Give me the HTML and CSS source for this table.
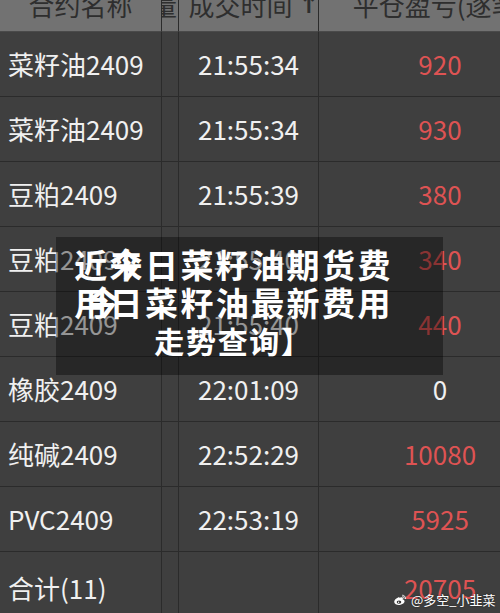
FILE: index.html
```html
<!DOCTYPE html>
<html lang="zh-CN">
<head>
    <meta charset="UTF-8">
    <meta name="viewport" content="width=device-width, initial-scale=1.0">
    <title>近来日菜籽油期货费用</title>
    <link rel="stylesheet" href="styles.css">
</head>
<body>
    <div class="screen">
        <div class="grid">
            <div class="cell head">合约名称</div>
            <div class="cell head narrow">量</div>
            <div class="cell head shifted">成交时间 <span class="arrow">↑</span></div>
            <div class="cell head">平仓盈亏(逐笔)</div>

            <div class="cell name">菜籽油2409</div><div class="cell gap"></div><div class="cell time">21:55:34</div><div class="cell val red">920</div>
            <div class="cell name">菜籽油2409</div><div class="cell gap"></div><div class="cell time">21:55:34</div><div class="cell val red">930</div>
            <div class="cell name">豆粕2409</div><div class="cell gap"></div><div class="cell time">21:55:39</div><div class="cell val red">380</div>
            <div class="cell name">豆粕2409</div><div class="cell gap"></div><div class="cell time">21:55:40</div><div class="cell val red">340</div>
            <div class="cell name">豆粕2409</div><div class="cell gap"></div><div class="cell time">21:55:40</div><div class="cell val red">440</div>
            <div class="cell name">橡胶2409</div><div class="cell gap"></div><div class="cell time">22:01:09</div><div class="cell val">0</div>
            <div class="cell name">纯碱2409</div><div class="cell gap"></div><div class="cell time">22:52:29</div><div class="cell val red">10080</div>
            <div class="cell name">PVC2409</div><div class="cell gap"></div><div class="cell time">22:53:19</div><div class="cell val red">5925</div>
            <div class="cell name total">合计(11)</div><div class="cell gap total"></div><div class="cell time total"></div><div class="cell val red total">20705</div>
        </div>

        <div class="banner">
            <div class="line">近<span class="stack">来<span class="over">今</span></span>日菜籽油期货费</div>
            <div class="line"><span class="stack">用<span class="over nudge">今</span></span>日菜籽油最新费用</div>
            <div class="line small">走势查询】</div>
        </div>

        <div class="mark">
            <svg class="weibo" width="14" height="12" viewBox="0 0 14 12">
                <path d="M5.6 3.2C3 4.2 1 6.2 1.2 8c.2 2 2.8 3.2 5.6 2.9 2.9-.3 5-2 4.8-3.8-.1-1.1-1.2-1.6-2-1.6.4-.8.5-1.6-.2-2-.8-.4-2.2.1-3.2.6.3-.8.2-1.5-.6-.9z" fill="#fff"/>
                <ellipse cx="6" cy="8.1" rx="2.3" ry="1.6" fill="#333"/>
                <circle cx="5.6" cy="8.2" r="0.7" fill="#fff"/>
                <path d="M9.6 1.2a3 3 0 0 1 3 3.4M9.8 2.6a1.5 1.5 0 0 1 1.4 1.8" stroke="#fff" stroke-width="0.9" fill="none" stroke-linecap="round"/>
            </svg>
            <span>@多空_小韭菜</span>
        </div>
    </div>
</body>
</html>
```

FILE: styles.css
```css
body {
    margin: 0;
    padding: 0;
    background: #3f3f3f;
    font-family: "Noto Sans CJK SC", "Noto Sans", sans-serif;
}
.screen {
    position: relative;
    width: 500px;
    height: 613px;
    overflow: hidden;
    background: #3f3f3f;
}
.grid {
    display: grid;
    width: 561px;
    grid-template-columns: 162px 17px 140px 242px;
    grid-auto-rows: 65px;
    grid-template-rows: 32px;
}
.cell {
    box-sizing: border-box;
    border-right: 1px solid #2b2b2b;
    border-bottom: 1px solid #2b2b2b;
    display: flex;
    align-items: center;
    justify-content: center;
    overflow: hidden;
    font-size: 26px;
    line-height: 26px;
    color: #f0f0f0;
    white-space: nowrap;
}
.head {
    background: #727272;
    color: #2e2e2e;
    align-items: flex-end;
    padding-bottom: 13px;
    border-bottom-color: #4a4a4a;
}
.head.narrow {
    justify-content: flex-end;
    padding-right: 1px;
}
.head.shifted {
    padding-left: 10px;
}
.arrow {
    font-family: "DejaVu Sans", sans-serif;
    font-weight: 700;
    font-size: 24px;
    margin-left: 6px;
}
.name {
    justify-content: flex-start;
    padding-left: 8px;
}
.val {
    border-right: none;
}
.red {
    color: #de5353;
}
.total {
    align-items: flex-start;
    padding-top: 23px;
}
.banner {
    position: absolute;
    left: 56px;
    top: 237px;
    width: 387px;
    height: 138px;
    box-sizing: border-box;
    padding: 8px 50px 0 18px;
    background: rgba(0, 0, 0, 0.38);
    color: #fff;
    font-weight: 700;
    text-align: center;
}
.line {
    font-size: 33px;
    line-height: 38px;
    letter-spacing: 2.4px;
    white-space: nowrap;
}
.line.small {
    font-size: 30px;
    letter-spacing: 1.7px;
}
.stack {
    position: relative;
}
.over {
    position: absolute;
    left: 0;
    top: 0;
    line-height: 1.448;
}
.over.nudge {
    left: 12px;
}
.mark {
    position: absolute;
    left: 393px;
    top: 592px;
    display: flex;
    align-items: center;
    gap: 4px;
    color: #fff;
    font-size: 13px;
    line-height: 16px;
    text-shadow: 0 0 2px rgba(0, 0, 0, 0.6);
}
```
